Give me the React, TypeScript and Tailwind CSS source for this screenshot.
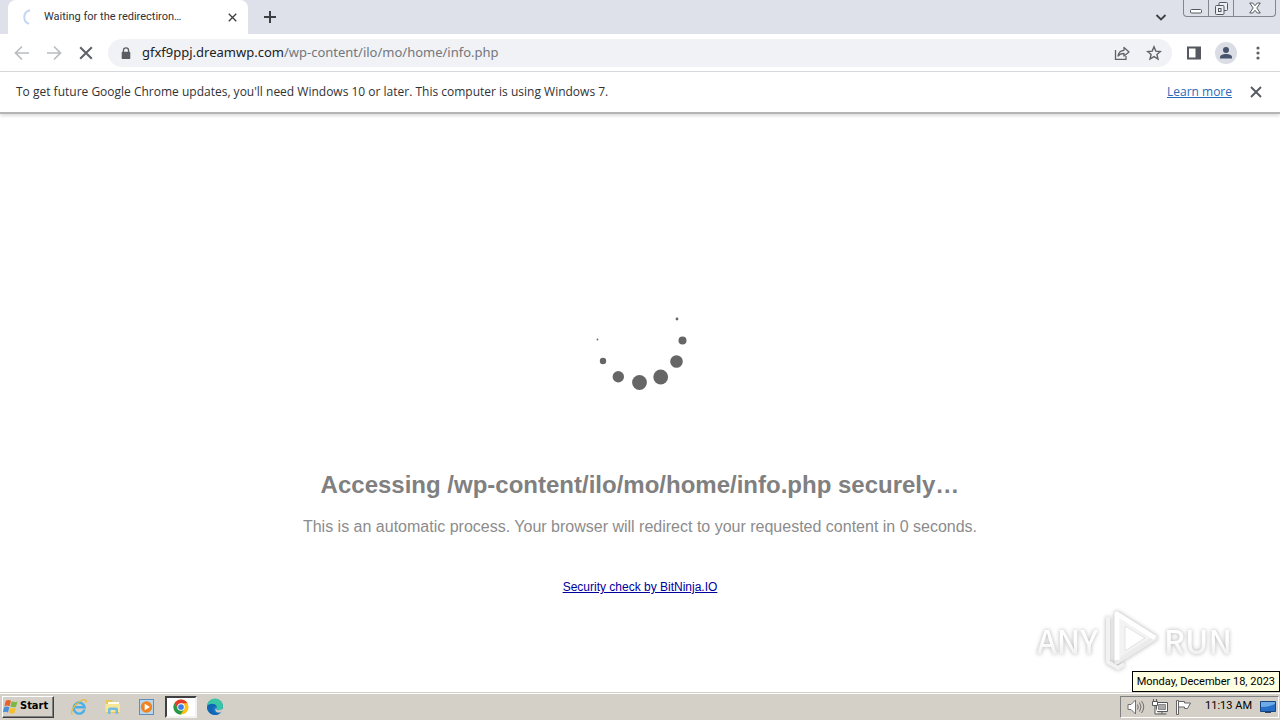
import type { ReactNode } from "react";

const dots = [
  { x: 97, y: 29, r: 1.4 },
  { x: 102.5, y: 50.5, r: 4 },
  { x: 96.5, y: 71.5, r: 6.3 },
  { x: 80.7, y: 87, r: 7.4 },
  { x: 59.5, y: 92.5, r: 7.4 },
  { x: 38.3, y: 86.7, r: 5.7 },
  { x: 23, y: 71, r: 3.2 },
  { x: 17.5, y: 49.5, r: 0.9 },
];

function CloseIcon({ className }: { className: string }) {
  return (
    <svg viewBox="0 0 12 12" className={className} fill="none" stroke="currentColor" strokeWidth="1.8">
      <path d="M1 1l10 10M11 1L1 11" />
    </svg>
  );
}

function IconButton({ label, children }: { label: string; children: ReactNode }) {
  return (
    <button aria-label={label} className="flex size-8 items-center justify-center">
      {children}
    </button>
  );
}

function TabStrip() {
  return (
    <div className="flex h-[34px] bg-[#dee1e9] pl-2">
      {/* Active tab */}
      <div className="flex w-60 items-center rounded-t-lg bg-white pr-2.5 pl-3">
        <svg viewBox="0 0 16 16" className="mr-2 size-4" fill="none" stroke="#c3d5f7" strokeWidth="2">
          <path d="M10 1.3A7 7 0 0 0 9 14.8" />
        </svg>
        <span className="flex-1 text-[11px] whitespace-nowrap text-[#303236]">Waiting for the redirectiron…</span>
        <button aria-label="Close tab" className="flex size-3 items-center justify-center text-[#3c4043]">
          <CloseIcon className="size-[9px]" />
        </button>
      </div>
      <button aria-label="New tab" className="ml-4 text-[#3c4043]">
        <svg viewBox="0 0 12 12" className="size-3" stroke="currentColor" strokeWidth="2">
          <path d="M6 0v12M0 6h12" />
        </svg>
      </button>
      <div className="flex-1" />
      <button aria-label="Search tabs" className="mr-4 text-[#3c4043]">
        <svg viewBox="0 0 12 12" className="size-3" fill="none" stroke="currentColor" strokeWidth="1.8">
          <path d="M1.5 4L6 8.5 10.5 4" />
        </svg>
      </button>
      {/* Window controls */}
      <div className="mr-1 flex h-[17px] w-[93px] divide-x divide-[#83868c] rounded-b border border-t-0 border-[#83868c] text-[#55585e]">
        <button aria-label="Minimize" className="flex w-[25px] items-end justify-center pb-0.5">
          <svg viewBox="0 0 12 6" className="h-1.5 w-3" fill="#fff" stroke="currentColor">
            <rect x="0.5" y="1.5" width="11" height="3.5" rx="1" />
          </svg>
        </button>
        <button aria-label="Restore" className="flex w-[25px] items-center justify-center">
          <svg viewBox="0 0 13 13" className="size-[13px]" fill="#eceef3" stroke="currentColor">
            <rect x="4" y="0.5" width="8.5" height="8" rx="1" />
            <rect x="0.5" y="3.5" width="8.5" height="9" rx="1" />
            <rect x="3.5" y="6.5" width="2.5" height="3" />
          </svg>
        </button>
        <button aria-label="Close" className="flex flex-1 items-center justify-center">
          <svg viewBox="0 0 12 12" className="size-3" fill="#fff" stroke="currentColor">
            <path d="M.7 1h3L6 3.7 8.3 1h3L7.8 6l3.5 5h-3L6 8.3 3.7 11h-3L4.2 6z" />
          </svg>
        </button>
      </div>
    </div>
  );
}

function Toolbar() {
  return (
    <div className="flex h-[38px] items-center border-b border-[#d5d7db] bg-white pr-1.5 pl-1.5">
      <div className="flex text-[#babcbe]">
        <IconButton label="Back">
          <svg viewBox="0 0 16 16" className="size-4" fill="none" stroke="currentColor" strokeWidth="1.7">
            <path d="M15 8H2M8 1.5L1.5 8 8 14.5" />
          </svg>
        </IconButton>
        <IconButton label="Forward">
          <svg viewBox="0 0 16 16" className="size-4" fill="none" stroke="currentColor" strokeWidth="1.7">
            <path d="M1 8h13M8 1.5L14.5 8 8 14.5" />
          </svg>
        </IconButton>
      </div>
      <div className="text-[#5f6368]">
        <IconButton label="Stop">
          <CloseIcon className="size-3.5" />
        </IconButton>
      </div>
      <div className="ml-1.5 flex h-7 flex-1 items-center rounded-full bg-[#f0f2f5] pr-0.5 pl-3">
        <svg viewBox="0 0 12 14" className="mr-2.5 h-3 w-3" fill="#5a5d62">
          <path d="M2 5.5h8a1 1 0 0 1 1 1V13a1 1 0 0 1-1 1H2a1 1 0 0 1-1-1V6.5a1 1 0 0 1 1-1z" />
          <path d="M3 6V4a3 3 0 0 1 6 0v2" fill="none" stroke="#5a5d62" strokeWidth="1.5" />
        </svg>
        <span className="flex-1 font-['Noto_Sans',sans-serif] text-[13px] whitespace-nowrap text-[#73777c]">
          <span className="text-[#202124]">gfxf9ppj.dreamwp.com</span>/wp-content/ilo/mo/home/info.php
        </span>
        <IconButton label="Share this page">
          <svg viewBox="0 0 16 16" className="size-4" fill="none" stroke="#5f6368" strokeWidth="1.3">
            <path d="M1.5 5v9.3H12V11" />
            <path d="M4 11c.5-4 2.5-5.5 6-5.7V2.5L15 7l-5 4V8.5C7.5 8.5 5.5 9 4 11z" strokeLinejoin="round" />
          </svg>
        </IconButton>
        <IconButton label="Bookmark this tab">
          <svg viewBox="0 0 16 16" className="size-4" fill="none" stroke="#5f6368" strokeWidth="1.4">
            <path d="M8 1.8l1.8 4.3 4.6.4-3.5 3 1.1 4.5L8 11.6 4 14l1.100-4.5-3.5-3 4.6-.4z" />
          </svg>
        </IconButton>
      </div>
      <div className="ml-1.5 flex">
        <IconButton label="Side panel">
          <svg viewBox="0 0 16 16" className="size-4" fill="#55585e">
            <path fillRule="evenodd" d="M1 1.5h14v13H1zM3 3.5v9h6.5v-9z" />
          </svg>
        </IconButton>
        <IconButton label="Profile">
          <svg viewBox="0 0 22 22" className="size-[22px]" fill="#47536e">
            <circle cx="11" cy="11" r="11" fill="#dadde3" />
            <circle cx="11" cy="8" r="3" />
            <path d="M5 16.5v-1.3c0-2 3-3.2 6-3.2s6 1.2 6 3.2v1.3z" />
          </svg>
        </IconButton>
        <IconButton label="Menu">
          <svg viewBox="0 0 4 14" className="h-3.5 w-1" fill="#5f6368">
            <circle cx="2" cy="2" r="1.6" />
            <circle cx="2" cy="7" r="1.6" />
            <circle cx="2" cy="12" r="1.6" />
          </svg>
        </IconButton>
      </div>
    </div>
  );
}

function InfoBar() {
  return (
    <div className="relative z-10 flex h-[42px] items-center border-b-2 border-[#b4b4b4] bg-white pr-[18px] pl-4 font-['Open_Sans','Noto_Sans',sans-serif] text-xs text-[#303236] shadow-[0_2px_3px_#dedede]">
      <p className="flex-1">
        To get future Google Chrome updates, you'll need Windows 10 or later. This computer is using Windows 7.
      </p>
      <a href="#learn" className="mr-[18px] text-[#2a6ab8] underline">
        Learn more
      </a>
      <button aria-label="Dismiss" className="text-[#55585e]">
        <CloseIcon className="size-3" />
      </button>
    </div>
  );
}

const watermarkText =
  "bg-linear-to-b from-white from-50% to-[#e0e0e0] bg-clip-text text-transparent drop-shadow-[0_0_2px_#b0b0b0]";

function Watermark() {
  return (
    <div className="absolute right-12 bottom-5 flex items-center gap-1 font-['Noto_Sans_CJK_SC',sans-serif] text-[32px] leading-[60px] font-medium">
      <span className={watermarkText}>ANY</span>
      <svg
        viewBox="0 0 58 64"
        className="h-16 w-[58px] drop-shadow-[0_0_2px_#b0b0b0]"
        fill="none"
        strokeLinejoin="round"
      >
        <path d="M6 9v45l10 6 6-4" stroke="#f2f2f2" strokeWidth="4" />
        <path d="M15 6v48l38-24z" fill="#f3f3f3" stroke="#ebebeb" strokeWidth="5" />
        <path d="M15 52V6l38 24" stroke="#fff" strokeWidth="5" />
        <path d="M23 18v25l20-13z" fill="#fff" stroke="#e3e3e3" />
      </svg>
      <span className={watermarkText}>RUN</span>
    </div>
  );
}

function PageContent() {
  return (
    <main className="relative flex flex-1 flex-col items-center bg-white pt-44 font-['Liberation_Sans',Arial,sans-serif]">
      <svg viewBox="0 0 120 120" className="size-[120px]" fill="#666">
        {dots.map((dot) => (
          <circle key={dot.x} cx={dot.x} cy={dot.y} r={dot.r} />
        ))}
      </svg>
      <h1 className="mt-[61px] text-2xl leading-7 font-bold text-[#808080]">
        Accessing /wp-content/ilo/mo/home/info.php securely…
      </h1>
      <p className="mt-[18px] text-base leading-5 text-[#8c8c8c]">
        This is an automatic process. Your browser will redirect to your requested content in 0 seconds.
      </p>
      <a href="#bitninja" className="mt-[42px] text-xs leading-4 text-[#00009c] underline">
        Security check by BitNinja.IO
      </a>
      <Watermark />
    </main>
  );
}

function WindowsFlag() {
  return (
    <svg viewBox="1 1 14 14" className="size-4">
      <path d="M3.5 2.5C5 1.6 6.5 1.7 8 2.6L6.8 7.3C5.3 6.5 3.8 6.5 2.2 7.3z" fill="#e8602c" />
      <path d="M8.700 3c1.7.8 3.3.8 5 .1l-1.3 4.7c-1.6.7-3.2.6-4.900-.2z" fill="#7cb843" />
      <path d="M2 8.2c1.6-.8 3-.8 4.6 0l-1.3 4.6c-1.5-.8-3-.8-4.5 0z" fill="#4a8fd8" />
      <path d="M7.3 8.6c1.7.8 3.2.8 4.9.1l-1.3 4.7c-1.7.6-3.2.5-4.900-.3z" fill="#f7bf2d" />
    </svg>
  );
}

function QuickLaunch() {
  return (
    <div className="ml-2 flex items-center">
      <button aria-label="Internet Explorer" className="flex h-6 w-[34px] items-center justify-center">
        <svg viewBox="0 0 18 18" className="size-[18px]" fill="none">
          <path d="M14.5 11.5A5.500 5.500 0 1 1 14.600 9.200H5" stroke="#4ab0e8" strokeWidth="2.4" />
          <path d="M2.5 16.500C-.5 14 5 6 10.5 3c4-2.300 6.500-1.500 5.500 1.500" stroke="#edb93c" strokeWidth="1.300" />
        </svg>
      </button>
      <button aria-label="File Explorer" className="flex h-6 w-[34px] items-center justify-center">
        <svg viewBox="0 0 18 18" className="size-[18px]">
          <path d="M2 2h6l1 2h6v11H2z" fill="#e8c75c" />
          <path d="M4 4h11v5H4z" fill="#fffdf0" />
          <path d="M1.5 6H16v8H1.5z" fill="#f9e596" />
          <path d="M4 16v-4.500a2 2 0 0 1 2-2h6a2 2 0 0 1 2 2V16h-2.500v-4h-5v4z" fill="#70bce5" />
        </svg>
      </button>
      <button aria-label="Media Player" className="flex h-6 w-[34px] items-center justify-center">
        <svg viewBox="0 0 18 18" className="size-[18px]">
          <rect x="1.5" y="1.5" width="14" height="15" fill="#b9d6ef" stroke="#5c8fc0" />
          <circle cx="8.5" cy="9" r="5.7" fill="#ee8420" />
          <path d="M6.7 5.700v6.600L12 9z" fill="#fff" />
        </svg>
      </button>
      <button
        aria-label="Google Chrome"
        className="mx-px flex h-[22px] w-8 items-center justify-center border-2 border-t-[#404040] border-r-[#f4f2ee] border-b-[#f4f2ee] border-l-[#404040] bg-white"
      >
        <svg viewBox="0 0 18 18" className="size-4">
          <circle cx="9" cy="9" r="8.5" fill="#fbc116" />
          <path d="M1.6 4.8A8.5 8.5 0 0 1 16.4 4.8H9L5.4 11.1z" fill="#e33b2e" />
          <path d="M1.6 4.8L5.4 11.1 9 13.2 8.6 17.5A8.5 8.5 0 0 1 1.6 4.8z" fill="#279847" />
          <path d="M8.6 17.5L12.6 11.1 9 13.2 5.4 11z" fill="#279847" />
          <circle cx="9" cy="9" r="4.2" fill="#fff" />
          <circle cx="9" cy="9" r="3.2" fill="#397de8" />
        </svg>
      </button>
      <button aria-label="Microsoft Edge" className="flex h-6 w-[34px] items-center justify-center">
        <svg viewBox="0 0 18 18" className="size-[18px]">
          <circle cx="9" cy="9" r="8" fill="#1675c5" />
          <path d="M1 9A8 8 0 0 1 17 8c.2 3-2 4.5-5 4.3-1.5-.1-2-.8-1.3-1.7C11.5 8 9.5 6 6.5 6 4 6 2 7 1 9z" fill="#38c6a4" />
          <path d="M1 9c1-3.5 7-4.5 9.5-1C7 7.5 5.5 11 7.5 13.500 9 15.5 12 16 14.5 14.800A8 8 0 0 1 1 9z" fill="#1267b4" />
          <path d="M10.7 10.6c-.7.9-.2 1.6 1.3 1.7 2 .1 3.7-.5 4.5-1.700l1 1.6-3 2.2c-3 .9-6-1-5-4z" fill="#d4d0c8" />
        </svg>
      </button>
    </div>
  );
}

function Tray() {
  return (
    <div className="relative flex h-[22px] items-center border border-t-[#808080] border-r-white border-b-white border-l-[#808080] pr-0.5 pl-1.5">
      <svg viewBox="0 0 18 16" className="mr-1.5 h-4 w-[18px]" fill="#fff" stroke="#707070">
        <path d="M1 5.5h3L8.5 1v14L4 10.5H1z" />
        <path d="M10.5 5.5q1.5 2.5 0 5M12.5 3.5q3 4.5 0 9M14.5 2q4.5 6 0 12" fill="none" />
      </svg>
      <svg viewBox="0 0 18 16" className="mr-1.5 h-4 w-[18px]" fill="#fff" stroke="#55585a">
        <path d="M5.5 3.5h11v9h-11z" />
        <path d="M7.5 5.5h7v5h-7z" fill="#a8a8a8" stroke="#8a8a8a" />
        <path d="M11 12.5v2M7 15h8.5" />
        <path d="M1.5 2.5h5v4h-5zM2.5 0v2.5M5.5 0v2.5M4 6.5V15h3" />
      </svg>
      <svg viewBox="0 0 18 16" className="mr-3 h-4 w-[18px]" fill="#fff" stroke="#666">
        <path d="M1.5 1.5h2v14h-2z" />
        <path d="M3.5 2.5h6V4h6l-3 5.5h-3V8h-6z" />
      </svg>
      <time className="mr-2 text-[11px] whitespace-nowrap text-black">11:13 AM</time>
      <svg viewBox="0 0 16 16" className="size-4">
        <path d="M.5 2.5h15v10H.5z" fill="#2870c5" stroke="#184481" />
        <path d="M1 3h14v2Q8 8 1 8z" fill="#6eabe8" />
        <path d="M5 13h6v1H5z" fill="#31445e" />
      </svg>
      <div
        role="tooltip"
        className="absolute right-[-2px] bottom-[25px] border border-black bg-[#ffffe1] px-1 text-[11px] leading-[19px] whitespace-nowrap text-black"
      >
        Monday, December 18, 2023
      </div>
    </div>
  );
}

function Taskbar() {
  return (
    <footer className="flex h-7 items-center border-t border-[#d4d0c8] bg-[#d4d0c8] pr-px shadow-[inset_0_1px_0_#fff]">
      <button className="ml-0.5 flex h-[22px] w-[52px] items-center gap-px border border-t-white border-r-[#404040] border-b-[#404040] border-l-white font-['DejaVu_Sans_Condensed','DejaVu_Sans',sans-serif] text-[11px] font-bold text-black shadow-[inset_-1px_-1px_0_#808080]">
        <WindowsFlag />
        Start
      </button>
      <QuickLaunch />
      <div className="flex-1" />
      <Tray />
    </footer>
  );
}

export default function App() {
  return (
    <div className="flex min-h-screen flex-col overflow-hidden bg-white font-[Roboto,sans-serif]">
      <TabStrip />
      <Toolbar />
      <InfoBar />
      <PageContent />
      <Taskbar />
    </div>
  );
}
